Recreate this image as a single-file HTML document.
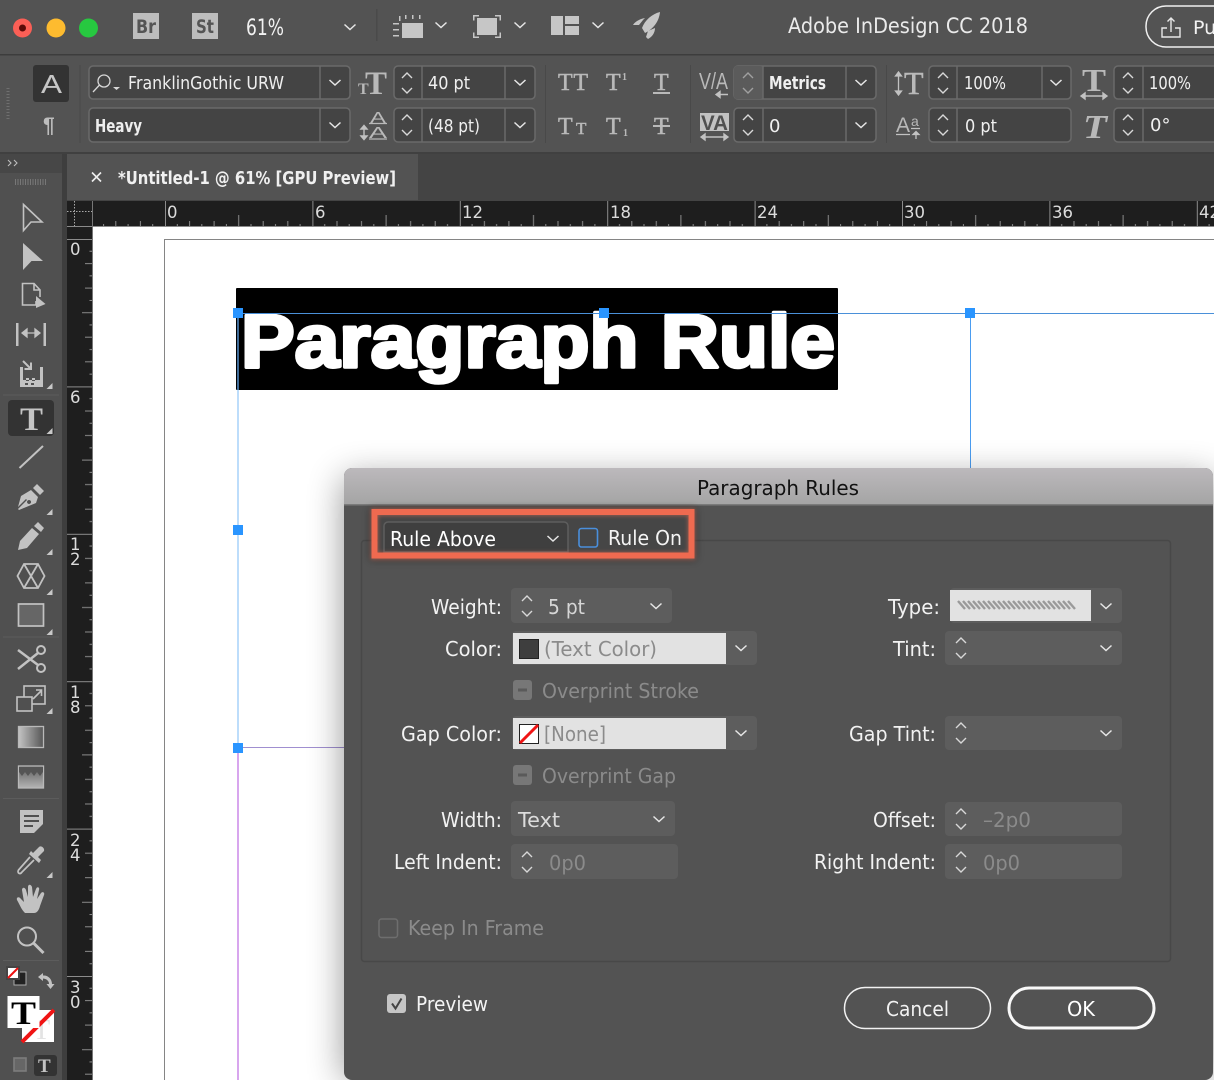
<!DOCTYPE html>
<html><head><meta charset="utf-8"><title>Adobe InDesign CC 2018</title>
<style>
html,body{margin:0;padding:0;background:#535353;overflow:hidden}
svg{display:block;width:1214px;height:1080px}
text{font-family:"DejaVu Sans","Liberation Sans",sans-serif;font-size:20px;fill:#f2f2f2}
.s{font-family:"Liberation Serif",serif;font-weight:bold;fill:#b9b9b9}
.s2{font-family:"Liberation Serif",serif;fill:#b9b9b9;stroke:#b9b9b9;stroke-width:.5px}
.sa{font-family:"Liberation Sans",sans-serif;fill:#b9b9b9}
.c{font-size:18px;fill:#f0f0f0}
.d{fill:#8b8b8b}
.r{font-size:16.500px;fill:#dcdcdc}
.ic{fill:none;stroke:#c2c2c2;stroke-width:1.6}
.f{fill:#c2c2c2}
.fld{fill:#444;stroke:#6a6a6a;stroke-width:1.5}
.dv{stroke:#6a6a6a;stroke-width:1.5}
.tf{fill:#5d5d5d}
.w{fill:#e2e2e2}
</style></head><body>
<svg xmlns="http://www.w3.org/2000/svg" viewBox="0 0 1214 1080">
<defs>
<symbol id="ch" overflow="visible"><path d="M-5.500-2.500 0 2.500 5.500-2.500" fill="none" stroke="#e6e6e6" stroke-width="1.500"/></symbol>
<symbol id="st" overflow="visible"><path d="M-5-5 0-10 5-5M-5 5 0 10 5 5" fill="none" stroke="#d8d8d8" stroke-width="1.400"/></symbol>
<symbol id="tri" overflow="visible"><path d="M0 0 6-6V0Z" fill="#c8c8c8"/></symbol>
<pattern id="hr" patternUnits="userSpaceOnUse" x="165" y="201" width="147.400" height="25"><path d="M.5 0V25M12.300 23V25M24.600 20V25M36.800 23V25M49.100 20V25M61.400 23V25M73.700 14V25M86 23V25M98.200 20V25M110.500 23V25M122.800 20V25M135.100 23V25" stroke="#8c8c8c" stroke-width="1"/></pattern>
<pattern id="vr" patternUnits="userSpaceOnUse" x="67" y="239" width="25" height="147.400"><path d="M0 .5H25M22.500 12.300H25M18 24.600H25M22.500 36.800H25M18 49.100H25M22.500 61.400H25M15 73.700H25M22.500 86H25M18 98.200H25M22.500 110.500H25M18 122.800H25M22.500 135.100H25" stroke="#8c8c8c" stroke-width="1"/></pattern>
<filter id="sh" x="-15%" y="-15%" width="130%" height="130%"><feGaussianBlur stdDeviation="18"/></filter>
<filter id="gl" x="-10%" y="-50%" width="120%" height="200%"><feGaussianBlur stdDeviation="4"/></filter>
<filter id="gl2" x="-10%" y="-50%" width="120%" height="200%"><feGaussianBlur stdDeviation="2"/></filter>
<linearGradient id="tg" x1="0" y1="0" x2="0" y2="1"><stop offset="0" stop-color="#bcb9bc"/><stop offset="1" stop-color="#a4a4a4"/></linearGradient>
<linearGradient id="g1" x1="0" y1="0" x2="1" y2="0"><stop offset="0" stop-color="#c4c4c4"/><stop offset="1" stop-color="#555"/></linearGradient>
<linearGradient id="g2" x1="0" y1="0" x2="0" y2="1"><stop offset="0" stop-color="#5c5c5c"/><stop offset="1" stop-color="#b4b4b4"/></linearGradient>
<clipPath id="dlg"><rect x="344" y="468" width="869" height="612" rx="8"/></clipPath>
</defs>

<!-- app chrome -->
<rect width="1214" height="1080" fill="#535353"/>
<rect y="54" width="1214" height="1.500" fill="#3d3d3d"/>
<rect y="152" width="1214" height="2" fill="#404040"/>

<circle cx="22.500" cy="28" r="9.500" fill="#fb5f56"/><circle cx="22.500" cy="28" r="3.500" fill="#5c0b08"/>
<circle cx="56" cy="28" r="9.500" fill="#fdbb2f"/>
<circle cx="88.500" cy="28" r="9.500" fill="#27c840"/>
<rect x="133" y="13" width="26" height="26" fill="#bdbdbd"/>
<text x="136" y="33" textLength="20" lengthAdjust="spacingAndGlyphs" style="fill:#555;font-size:19px;font-weight:bold">Br</text>
<rect x="192" y="13" width="26" height="26" fill="#bdbdbd"/>
<text x="196" y="33" textLength="18" lengthAdjust="spacingAndGlyphs" style="fill:#555;font-size:19px;font-weight:bold">St</text>
<text x="246" y="35" textLength="38" lengthAdjust="spacingAndGlyphs" style="font-size:22px">61%</text>
<use href="#ch" x="350" y="27"/>
<rect x="376" y="9" width="1.500" height="32" fill="#4a4a4a"/>
<g fill="#c6c6c6">
<rect x="402" y="23" width="21" height="15"/>
<path d="M393 23h6v1.500h-6zM393 29h6v1.500h-6zM393 35h6v1.500h-6zM399 16h1.500v5h-1.500zM405 15h1.500v4h-1.500zM412 15h1.500v4h-1.500zM419 15h1.500v4h-1.500z"/>
<rect x="477" y="18" width="20" height="17"/>
<path d="M473 15h6v1.500h-4.500v4H473zM501 15h-6v1.500h4.500v4h1.500zM473 38h6v-1.500h-4.500v-4H473zM501 38h-6v-1.500h4.500v-4h1.500z"/>
<rect x="551" y="16" width="12" height="19"/><rect x="565" y="16" width="14" height="8"/><rect x="565" y="26" width="14" height="9"/>
<path d="M660 12C652 14 645 20 642 28L645 33C653 29 659 22 660 12ZM645 18C639 19 635 22 633 25L639 25 643 20ZM655 28 648 31 646 37 648 39C652 37 655 33 655 28Z"/>
</g>
<use href="#ch" x="441" y="25"/><use href="#ch" x="520" y="25"/><use href="#ch" x="598" y="25"/>
<text x="788" y="33" textLength="240" lengthAdjust="spacingAndGlyphs" style="font-size:21px;fill:#eaeaea">Adobe InDesign CC 2018</text>
<rect x="1146" y="6" width="110" height="41" rx="20" fill="none" stroke="#f0f0f0" stroke-width="1.500"/>
<path d="M1167 28h-5v9h18V28h-5M1171 32V18M1167.500 21.500l3.500-3.500 3.500 3.500" fill="none" stroke="#e8e8e8" stroke-width="1.400"/>
<text x="1193" y="34" style="font-size:19px">Pu</text>

<!-- control panel -->
<rect x="33" y="65" width="36" height="37" rx="3" fill="#333"/>
<text class="sa" x="41" y="93" textLength="21" lengthAdjust="spacingAndGlyphs" style="font-size:26px;fill:#c6c6c6">A</text>
<text class="sa" x="43" y="132" style="font-size:21px;fill:#bdbdbd;font-weight:bold">¶</text>
<path d="M8 88v32" stroke="#6f6f6f" stroke-width="3" stroke-dasharray="1 2"/>
<rect x="79.500" y="65" width="1" height="78" fill="#494949"/>

<rect class="fld" x="89" y="66" width="261" height="33" rx="4"/><path class="dv" d="M320 66V99"/>
<circle cx="104" cy="81" r="6" fill="none" stroke="#d8d8d8" stroke-width="1.300"/><path d="M99.500 85 93 92" stroke="#d8d8d8" stroke-width="1.300"/><path d="M113 87h7l-3.500 3z" fill="#d8d8d8"/>
<text x="128" y="89" textLength="156" lengthAdjust="spacingAndGlyphs" style="font-size:18px;fill:#eee">FranklinGothic URW</text>
<use href="#ch" x="335" y="82.500"/>
<rect class="fld" x="89" y="108" width="261" height="34" rx="4"/><path class="dv" d="M320 108V142"/>
<text x="95" y="132" textLength="47" lengthAdjust="spacingAndGlyphs" style="font-size:18px;font-weight:bold;fill:#eee">Heavy</text>
<use href="#ch" x="335" y="125"/>

<text class="s" x="358" y="94" style="font-size:16px">T</text><text class="s" x="365" y="94" style="font-size:33px">T</text>
<text class="sa" x="370" y="123" textLength="16" lengthAdjust="spacingAndGlyphs" style="font-size:16px">A</text>
<text class="sa" x="369" y="138" textLength="18" lengthAdjust="spacingAndGlyphs" style="font-size:16px">A</text>
<path d="M369 123.500h18M369 139h18" stroke="#b9b9b9" stroke-width="1.200"/>
<path d="M364 126v13M361 129l3-3.500 3 3.500zM361 136l3 3.500 3-3.500z" fill="#c2c2c2" stroke="#c2c2c2" stroke-width="1.400"/>

<rect class="fld" x="394" y="66" width="141" height="33" rx="4"/><path class="dv" d="M422 66V99M505 66V99"/>
<use href="#st" x="407" y="83"/><use href="#ch" x="520" y="82.500"/>
<text class="c" x="428" y="89" textLength="42" lengthAdjust="spacingAndGlyphs">40 pt</text>
<rect class="fld" x="394" y="108" width="141" height="34" rx="4"/><path class="dv" d="M422 108V142M505 108V142"/>
<use href="#st" x="407" y="125"/><use href="#ch" x="520" y="125"/>
<text class="c" x="428" y="132" textLength="52" lengthAdjust="spacingAndGlyphs">(48 pt)</text>
<rect x="545" y="65" width="1" height="78" fill="#494949"/>

<text class="s2" x="558" y="90" textLength="30" lengthAdjust="spacing" style="font-size:24px">TT</text>
<text class="s2" x="606" y="90" style="font-size:24px">T</text><text class="s" x="622" y="80" style="font-size:10px">1</text>
<text class="s2" x="654" y="90" style="font-size:24px">T</text><rect x="653" y="92" width="17" height="2" fill="#b9b9b9"/>
<text class="s2" x="558" y="134" style="font-size:24px">T</text><text class="s2" x="576" y="134" style="font-size:17px">T</text>
<text class="s2" x="606" y="134" style="font-size:24px">T</text><text class="s" x="623" y="136" style="font-size:10px">1</text>
<text class="s2" x="654" y="134" style="font-size:24px">T</text><rect x="653" y="125" width="17" height="2" fill="#b9b9b9"/>
<rect x="690" y="65" width="1" height="78" fill="#494949"/>

<text class="sa" x="699" y="89" textLength="29" lengthAdjust="spacingAndGlyphs" style="font-size:23px">V/A</text>
<path d="M718 94.500h10M716 94.500l4-3v6z" fill="#c2c2c2" stroke="#c2c2c2" stroke-width="1.400"/>
<rect x="700" y="113" width="29" height="18" fill="#c2c2c2"/>
<text class="sa" x="701" y="130" textLength="27" lengthAdjust="spacingAndGlyphs" style="font-size:21px;font-weight:bold;fill:#505050">VA</text>
<path d="M702 137h25M701 137l4-3v6zM728 137l-4-3v6z" fill="#c2c2c2" stroke="#c2c2c2" stroke-width="1.400"/>

<rect class="fld" x="734" y="66" width="142" height="33" rx="4"/><rect x="734" y="66" width="29" height="33" rx="3" fill="#5b5b5b"/><path class="dv" d="M763 66V99M846 66V99"/>
<use href="#st" x="748" y="83" opacity=".55"/><use href="#ch" x="861" y="82.500"/>
<text class="c" x="769" y="89" textLength="57" lengthAdjust="spacingAndGlyphs" style="font-weight:bold">Metrics</text>
<rect class="fld" x="734" y="108" width="142" height="34" rx="4"/><path class="dv" d="M763 108V142M846 108V142"/>
<use href="#st" x="748" y="125"/><use href="#ch" x="861" y="125"/>
<text class="c" x="769" y="132">0</text>
<rect x="886" y="65" width="1" height="78" fill="#494949"/>

<text class="s2" x="904" y="94" style="font-size:32px">T</text>
<path d="M898.500 75v17M895.500 76l3-4 3 4zM895.500 91l3 4 3-4z" fill="#c2c2c2" stroke="#c2c2c2" stroke-width="1.300"/>
<rect class="fld" x="929" y="66" width="142" height="33" rx="4"/><path class="dv" d="M957 66V99M1042 66V99"/>
<use href="#st" x="943" y="83"/><use href="#ch" x="1056" y="82.500"/>
<text class="c" x="964" y="89" textLength="42" lengthAdjust="spacingAndGlyphs">100%</text>
<text class="sa" x="896" y="132" textLength="14" lengthAdjust="spacingAndGlyphs" style="font-size:21px">A</text><text class="sa" x="911" y="126" style="font-size:14px">a</text>
<path d="M896 134.500h14M911 128.500h9" stroke="#c2c2c2" stroke-width="1.300" fill="none"/>
<path d="M916 139v-6M913 134.500l3-3 3 3z" fill="#c2c2c2" stroke="#c2c2c2" stroke-width="1.300"/>
<rect class="fld" x="929" y="108" width="142" height="34" rx="4"/><path class="dv" d="M957 108V142"/>
<use href="#st" x="943" y="125"/>
<text class="c" x="965" y="132" textLength="32" lengthAdjust="spacingAndGlyphs">0 pt</text>

<text class="s" x="1082" y="91" textLength="24" lengthAdjust="spacingAndGlyphs" style="font-size:32px">T</text>
<path d="M1082 96h24M1081 96l4-3v6zM1107 96l-4-3v6z" fill="#c2c2c2" stroke="#c2c2c2" stroke-width="1.400"/>
<text class="s" x="1083" y="138" textLength="24" lengthAdjust="spacingAndGlyphs" style="font-size:34px;font-style:italic">T</text>
<rect class="fld" x="1114" y="66" width="120" height="33" rx="4"/><path class="dv" d="M1143 66V99"/>
<use href="#st" x="1128" y="83"/>
<text class="c" x="1149" y="89" textLength="42" lengthAdjust="spacingAndGlyphs">100%</text>
<rect class="fld" x="1114" y="108" width="120" height="34" rx="4"/><path class="dv" d="M1143 108V142"/>
<use href="#st" x="1128" y="125"/>
<text class="c" x="1150" y="131">0°</text>

<!-- tab bar -->
<rect x="67" y="154" width="1147" height="47" fill="#444"/>
<rect x="67" y="154" width="351" height="46" fill="#535353"/>
<path d="M92 172.500l9 9M101 172.500l-9 9" stroke="#eee" stroke-width="1.600"/>
<text x="118" y="184" textLength="278" lengthAdjust="spacingAndGlyphs" style="font-size:18px;font-weight:bold;fill:#f0f0f0">*Untitled-1 @ 61% [GPU Preview]</text>

<!-- tools panel -->
<rect x="0" y="154" width="62" height="926" fill="#505050"/>
<rect x="62" y="154" width="5" height="926" fill="#3e3e3e"/>
<rect x="0" y="154" width="62" height="19" fill="#474747"/>
<path d="M8 160l3 3-3 3M14 160l3 3-3 3" fill="none" stroke="#bdbdbd" stroke-width="1.100"/>
<path d="M15 182h31" stroke="#777" stroke-width="6" stroke-dasharray="1 1.500"/>

<path class="ic" d="M23.500 204.500 42 222H31L23.500 230.500Z"/>
<path class="f" d="M23 243 43 261H31.500L23 270Z"/>
<path class="ic" d="M36 301V305H22.500V283.500H34L40 290V297M34 283.500V290H40"/>
<path class="f" d="M36 296 45.500 304 36 308Z"/>
<path class="f" d="M16 323h2.500v23H16zM43.500 323H46v23h-2.500z"/>
<path d="M22 333h18M22 333l5-4v8zM40 333l-5-4v8z" fill="#c2c2c2" stroke="#c2c2c2" stroke-width="1.300"/>
<path class="f" fill-rule="evenodd" d="M20 367h3v13h17v-13h3v20H20ZM26 378v3h3v-3ZM32 378v3h3v-3ZM25 383v2h3v-2ZM31 383v2h3v-2Z"/>
<path d="M23 361l7 7M31 362.500v6.500h-6.500" fill="none" stroke="#c2c2c2" stroke-width="2"/>
<use href="#tri" x="46.500" y="389"/>
<rect x="3" y="394.500" width="56" height="1" fill="#5c5c5c"/>

<rect x="8" y="400" width="46" height="36" rx="4" fill="#333"/>
<text class="s" x="20" y="430" textLength="23" lengthAdjust="spacingAndGlyphs" style="font-size:33px;fill:#c4c4c4">T</text>
<use href="#tri" x="46.500" y="434"/>
<path d="M19.500 468 43 446" stroke="#c2c2c2" stroke-width="2"/>
<path class="f" fill-rule="evenodd" d="M37 484 44 491 40 495 33 488ZM31 490 38 497 36 503 19 510 18 509 27 500 26 499 18 507 21 496ZM29 500a2 2 0 1 0 .1 0Z"/>
<use href="#tri" x="46.500" y="515"/>
<path class="f" fill-rule="evenodd" d="M38 522 44 528 41 532 34 526ZM32 528 39 534 27 548 18 550 20 541Z"/>
<use href="#tri" x="46.500" y="555"/>
<path class="ic" d="M24 564H38L44.500 576 38 588H24L17.500 576ZM24 564 38 588M38 564 24 588" style="stroke-width:1.800"/>
<use href="#tri" x="46.500" y="595"/>
<rect x="18.500" y="604" width="25" height="22" fill="#666" stroke="#c2c2c2" stroke-width="1.700"/>
<use href="#tri" x="46.500" y="635"/>
<rect x="3" y="636.500" width="56" height="1" fill="#5c5c5c"/>

<circle cx="41" cy="650" r="4" class="ic" style="stroke-width:2"/><circle cx="41" cy="668" r="4" class="ic" style="stroke-width:2"/>
<path d="M18 650 38 665M18 669 38 653" stroke="#c2c2c2" stroke-width="2.500"/>
<rect x="24" y="686" width="21" height="18" class="ic"/><rect x="17" y="697" width="15" height="14" fill="#505050" stroke="#c2c2c2" stroke-width="1.600"/>
<path d="M33 699 41 691M36 690h5.500V696" fill="none" stroke="#c2c2c2" stroke-width="1.600"/>
<use href="#tri" x="46.500" y="714"/>
<rect x="18.500" y="726.500" width="25" height="21" fill="url(#g1)" stroke="#b9b9b9" stroke-width="1.300"/>
<rect x="18.500" y="766" width="25" height="22" fill="url(#g2)" stroke="#b9b9b9" stroke-width="1.300"/>
<path d="M19 767h24v5l-3 4-3-4-3 4-3-4-3 4-3-4-3 4-3-4Z" fill="#555"/>
<rect x="3" y="798" width="56" height="1" fill="#5c5c5c"/>

<path class="f" fill-rule="evenodd" d="M20 810H43V824L34 833H20ZM24 815v2H39v-2ZM24 820v2H39v-2ZM24 825v2H33v-2Z"/>
<path d="M36 833 43 826V833Z" fill="#505050"/>
<path class="ic" style="stroke-width:1.700" d="M34 860 22 872C20 875 17 873 18.500 870L30 857"/>
<path class="f" d="M29 854 39 863 41 860 38 857 44 851C45 848 41 845 39 847L33 853 31 851Z"/>
<use href="#tri" x="46.500" y="878"/>
<path class="f" d="M25 913C21 909 20 905 17 900 16 897 19 896 21 899L24 902 22 890C22 887 25 887 26 890L28 897 28 887C28 884 31 884 32 887L33 897 36 889C37 886 40 887 39 890L37 899 41 893C43 891 45 893 44 895L40 906C39 910 37 913 34 913Z"/>
<circle cx="27" cy="936.500" r="9" class="ic" style="stroke-width:2"/>
<path d="M33.500 943 43.500 953" stroke="#c2c2c2" stroke-width="3"/>
<rect x="3" y="960" width="56" height="1" fill="#5c5c5c"/>

<rect x="14" y="972" width="12" height="13" fill="#222" stroke="#aaa"/>
<rect x="7" y="967" width="12" height="12" fill="#fff" stroke="#444" stroke-width="2"/>
<path d="M8 978 18 968" stroke="#e11" stroke-width="2"/>
<path d="M38 977l5-4v2.500C48 975 52 979 52 984h2.500l-4 5-4-5H49C49 981 47 979 43 978.500V981Z" fill="#c2c2c2"/>
<rect x="22" y="1010" width="32" height="32" fill="#fff"/>
<text x="33" y="1039" class="s" style="font-size:28px;fill:#e3e3e3;font-weight:normal">T</text>
<path d="M22 1042 54 1010" stroke="#f01414" stroke-width="4"/>
<rect x="7.500" y="996" width="32" height="32" fill="#fff"/>
<text x="11" y="1024" class="s" textLength="25" lengthAdjust="spacingAndGlyphs" style="font-size:33px;fill:#000">T</text>
<rect x="14" y="1058" width="12" height="13" fill="#666" stroke="#7c7c7c" stroke-width="1.600"/>
<rect x="34" y="1055" width="23" height="21" rx="3" fill="#333"/>
<text class="s" x="38" y="1072" style="font-size:19px;fill:#c4c4c4">T</text>

<!-- rulers -->
<rect x="67" y="201" width="1147" height="26" fill="#1e1e1e"/>
<rect x="67" y="226" width="1147" height="1" fill="#8a8a8a"/>
<rect x="67" y="227" width="26" height="853" fill="#1e1e1e"/>
<rect x="93" y="201" width="1121" height="25" fill="url(#hr)"/>
<rect x="67" y="239" width="25" height="841" fill="url(#vr)"/>
<rect x="92" y="201" width="1" height="879" fill="#777"/>
<path d="M67 211.500H92M74.500 201V226" stroke="#aaa" stroke-width="1" stroke-dasharray="1.500 1.500"/>
<g>
<text class="r" x="167" y="218">0</text><text class="r" x="315" y="218">6</text><text class="r" x="462" y="218">12</text><text class="r" x="610" y="218">18</text><text class="r" x="757" y="218">24</text><text class="r" x="904" y="218">30</text><text class="r" x="1052" y="218">36</text><text class="r" x="1199" y="218">42</text>
<text class="r" x="70" y="255">0</text><text class="r" x="70" y="403">6</text>
<text class="r" x="70" y="550">1</text><text class="r" x="70" y="565">2</text>
<text class="r" x="70" y="698">1</text><text class="r" x="70" y="713">8</text>
<text class="r" x="70" y="846">2</text><text class="r" x="70" y="861">4</text>
<text class="r" x="70" y="993">3</text><text class="r" x="70" y="1008">0</text>
</g>

<!-- canvas -->
<rect x="93" y="227" width="1121" height="853" fill="#fff"/>
<path d="M164.500 1080V239.500H1214" fill="none" stroke="#858585" stroke-width="1"/>
<rect x="236" y="288" width="602" height="102" rx="1" fill="#000"/>
<text x="241" y="367" textLength="594" lengthAdjust="spacingAndGlyphs" style="font-family:'Liberation Sans',sans-serif;font-weight:bold;font-size:75px;fill:#fff;stroke:#fff;stroke-width:3.500px;stroke-linejoin:round">Paragraph Rule</text>
<path d="M238 313.500H1214" stroke="#4a90d9" stroke-width="1"/>
<path d="M238 313V747" stroke="#a7d2fa" stroke-width="1.500"/>
<path d="M238 313V390" stroke="#2c6fb5" stroke-width="1"/>
<path d="M970.500 313V470" stroke="#4a9cf0" stroke-width="1"/>
<path d="M238 747.500H350" stroke="#a08fd0" stroke-width="1"/>
<path d="M238 747V1080" stroke="#cc88e8" stroke-width="1.500"/>
<g fill="#2a95ff"><rect x="233" y="308" width="10" height="10"/><rect x="599" y="308" width="10" height="10"/><rect x="965" y="308" width="10" height="10"/><rect x="233" y="525" width="10" height="10"/><rect x="233" y="743" width="10" height="10"/></g>

<!-- dialog -->
<rect x="344" y="478" width="869" height="602" fill="#000" opacity=".42" filter="url(#sh)"/>
<rect x="344" y="468" width="869" height="612" rx="8" fill="#535353"/>
<rect x="344" y="468" width="869" height="37" fill="url(#tg)" clip-path="url(#dlg)"/>
<rect x="344" y="504" width="869" height="1.500" fill="#7b7b7b"/>
<text x="697" y="495" textLength="162" lengthAdjust="spacingAndGlyphs" style="font-size:20px;fill:#111">Paragraph Rules</text>

<rect x="361.500" y="540.500" width="809" height="421" rx="3" fill="none" stroke="#484848" stroke-width="1.500"/>

<!-- highlight -->
<rect x="374" y="512" width="318" height="44" fill="none" stroke="#000" stroke-width="8" opacity=".4" filter="url(#gl)"/>
<rect x="378" y="515" width="310" height="37" fill="#464646"/>
<path d="M384 552V526a4 4 0 0 1 4-4H564a4 4 0 0 1 4 4V552Z" fill="#3f3f3f" stroke="#5e5e5e" stroke-width="1.500"/>
<rect x="374.500" y="512" width="317" height="44" fill="none" stroke="#ff7a5f" stroke-width="7" opacity=".5" filter="url(#gl2)"/>
<rect x="374.500" y="512" width="317" height="43.500" fill="none" stroke="#ef6a50" stroke-width="6"/>
<text x="390" y="546" textLength="106" lengthAdjust="spacingAndGlyphs" style="fill:#fff">Rule Above</text>
<use href="#ch" x="553" y="538.500"/>
<rect x="579" y="528.500" width="18.500" height="18.500" rx="2.500" fill="none" stroke="#4a8fdc" stroke-width="1.600"/>
<text x="608" y="545" textLength="74" lengthAdjust="spacingAndGlyphs" style="fill:#f4f4f4">Rule On</text>

<!-- row: weight/type -->
<rect class="tf" x="511" y="588" width="161" height="35" rx="4"/>
<use href="#st" x="527" y="606"/><use href="#ch" x="656" y="606"/>
<text x="431" y="614" textLength="71" lengthAdjust="spacingAndGlyphs">Weight:</text>
<text x="548" y="614" textLength="37" lengthAdjust="spacingAndGlyphs" style="fill:#d6d6d6">5 pt</text>
<rect class="tf" x="950" y="588" width="172" height="35" rx="4"/>
<rect class="w" x="950" y="590" width="141" height="31"/>
<path d="M958 601l7 8M963 601l7 8M968 601l7 8M973 601l7 8M978 601l7 8M983 601l7 8M988 601l7 8M993 601l7 8M998 601l7 8M1003 601l7 8M1008 601l7 8M1013 601l7 8M1018 601l7 8M1023 601l7 8M1028 601l7 8M1033 601l7 8M1038 601l7 8M1043 601l7 8M1048 601l7 8M1053 601l7 8M1058 601l7 8M1063 601l7 8M1068 601l7 8" stroke="#9a9a9a" stroke-width="2.400"/>
<use href="#ch" x="1106" y="606"/>
<text x="888" y="614" textLength="52" lengthAdjust="spacingAndGlyphs">Type:</text>

<!-- row: color/tint -->
<rect class="tf" x="512" y="631" width="245" height="34" rx="4"/>
<rect class="w" x="513" y="633" width="213" height="31"/>
<rect x="519.500" y="639.500" width="19" height="19" fill="#3e3e3e" stroke="#222" stroke-width="1"/>
<use href="#ch" x="741" y="648"/>
<text x="445" y="656" textLength="57" lengthAdjust="spacingAndGlyphs">Color:</text>
<text class="d" x="544" y="656" textLength="113" lengthAdjust="spacingAndGlyphs">(Text Color)</text>
<rect class="tf" x="945" y="631" width="177" height="34" rx="4"/>
<use href="#st" x="961" y="648"/><use href="#ch" x="1106" y="648"/>
<text x="893" y="656" textLength="43" lengthAdjust="spacingAndGlyphs">Tint:</text>

<rect x="513" y="680" width="19" height="20" rx="3" fill="#777"/><rect x="518" y="688.500" width="9" height="3" fill="#5a5a5a"/>
<text class="d" x="542" y="698" textLength="157" lengthAdjust="spacingAndGlyphs">Overprint Stroke</text>

<!-- row: gap -->
<rect class="tf" x="512" y="716" width="245" height="34" rx="4"/>
<rect class="w" x="513" y="718" width="213" height="31"/>
<rect x="519.500" y="724.500" width="19" height="19" fill="#fff" stroke="#222" stroke-width="1"/>
<path d="M520 743 538 725" stroke="#f01414" stroke-width="3"/>
<use href="#ch" x="741" y="733"/>
<text x="401" y="741" textLength="101" lengthAdjust="spacingAndGlyphs">Gap Color:</text>
<text class="d" x="544" y="741" textLength="62" lengthAdjust="spacingAndGlyphs">[None]</text>
<rect class="tf" x="945" y="716" width="177" height="34" rx="4"/>
<use href="#st" x="961" y="733"/><use href="#ch" x="1106" y="733"/>
<text x="849" y="741" textLength="87" lengthAdjust="spacingAndGlyphs">Gap Tint:</text>

<rect x="513" y="765" width="19" height="20" rx="3" fill="#777"/><rect x="518" y="773.500" width="9" height="3" fill="#5a5a5a"/>
<text class="d" x="542" y="783" textLength="134" lengthAdjust="spacingAndGlyphs">Overprint Gap</text>

<!-- row: width/offset -->
<rect class="tf" x="511" y="801" width="164" height="35" rx="4"/>
<use href="#ch" x="659" y="819"/>
<text x="441" y="827" textLength="61" lengthAdjust="spacingAndGlyphs">Width:</text>
<text x="518" y="827" textLength="42" lengthAdjust="spacingAndGlyphs" style="fill:#dcdcdc">Text</text>
<rect class="tf" x="945" y="802" width="177" height="34" rx="4"/>
<use href="#st" x="961" y="819"/>
<text x="873" y="827" textLength="63" lengthAdjust="spacingAndGlyphs">Offset:</text>
<text class="d" x="983" y="827" textLength="48" lengthAdjust="spacingAndGlyphs">–2p0</text>

<rect class="tf" x="511" y="844" width="167" height="35" rx="4"/>
<use href="#st" x="527" y="862"/>
<text x="394" y="869" textLength="108" lengthAdjust="spacingAndGlyphs">Left Indent:</text>
<text class="d" x="549" y="870" textLength="37" lengthAdjust="spacingAndGlyphs">0p0</text>
<rect class="tf" x="945" y="844" width="177" height="35" rx="4"/>
<use href="#st" x="961" y="862"/>
<text x="814" y="869" textLength="122" lengthAdjust="spacingAndGlyphs">Right Indent:</text>
<text class="d" x="983" y="870" textLength="37" lengthAdjust="spacingAndGlyphs">0p0</text>

<rect x="379" y="919" width="18.500" height="18.500" rx="2.500" fill="none" stroke="#6e6e6e" stroke-width="1.500"/>
<text class="d" x="408" y="935" textLength="136" lengthAdjust="spacingAndGlyphs">Keep In Frame</text>

<rect x="387" y="994" width="19" height="19" rx="3" fill="#c6c6c6"/>
<path d="M392 1003.500l3.500 5 6-10" fill="none" stroke="#444" stroke-width="2"/>
<text x="416" y="1011" textLength="72" lengthAdjust="spacingAndGlyphs" style="fill:#f4f4f4">Preview</text>

<rect x="844.500" y="987.500" width="146" height="41" rx="20.500" fill="none" stroke="#f2f2f2" stroke-width="1.500"/>
<text x="886" y="1016" textLength="63" lengthAdjust="spacingAndGlyphs">Cancel</text>
<rect x="1009" y="988" width="145" height="40" rx="20" fill="none" stroke="#f8f8f8" stroke-width="3"/>
<text x="1067" y="1016" textLength="28" lengthAdjust="spacingAndGlyphs" style="fill:#fff">OK</text>
</svg>
</body></html>
